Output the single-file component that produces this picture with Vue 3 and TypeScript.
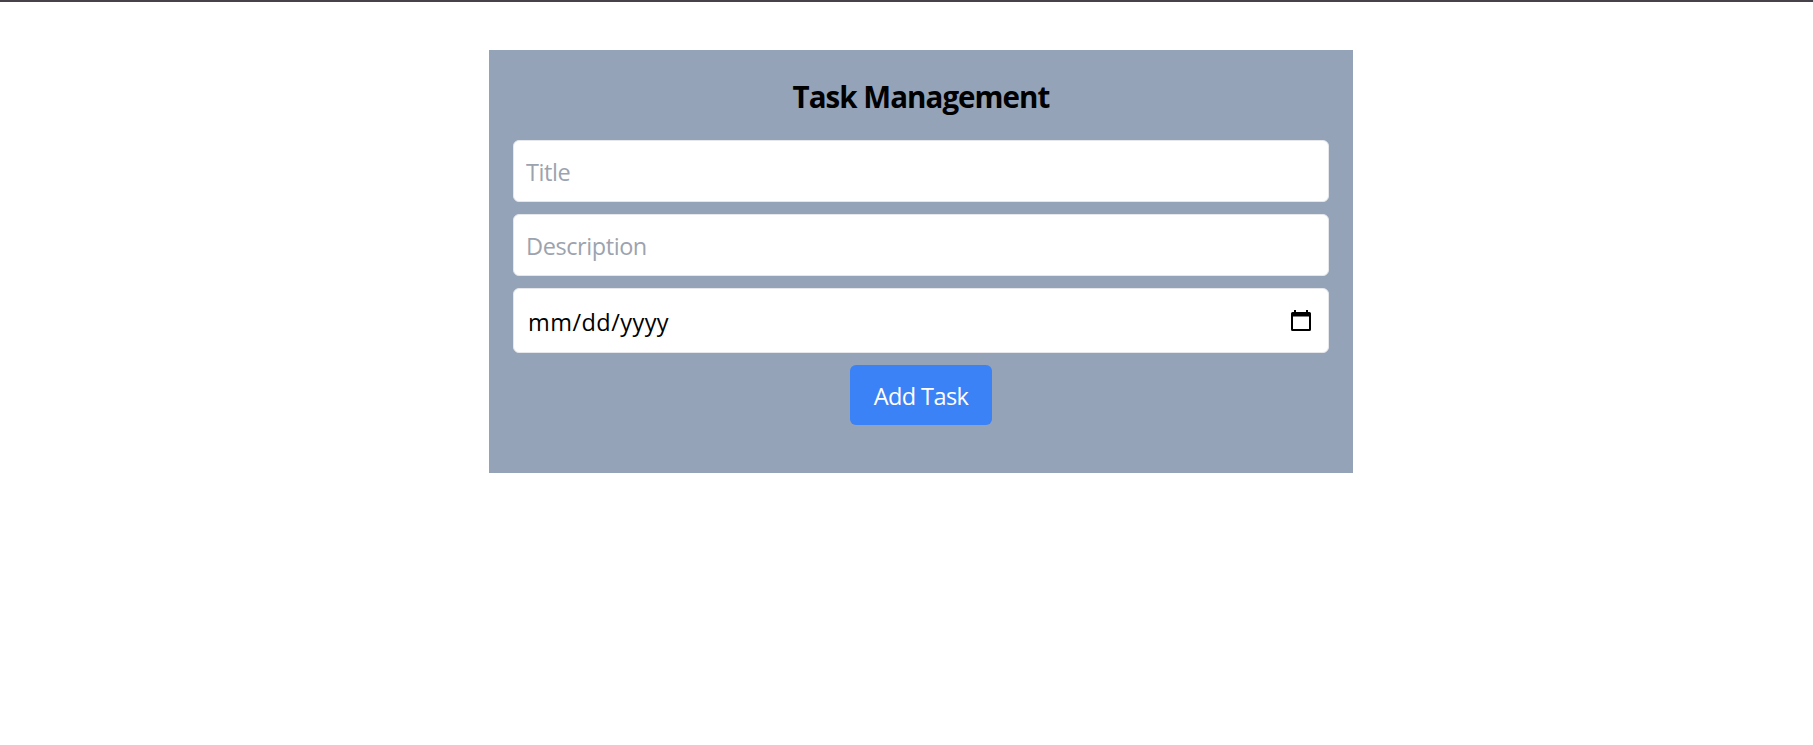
<script setup lang="ts">
import { ref } from 'vue'

const title = ref('')
const description = ref('')
</script>

<template>
  <main class="page">
    <form class="card" @submit.prevent>
      <h1 class="heading">Task Management</h1>
      <input v-model="title" class="field title" type="text" placeholder="Title" />
      <input v-model="description" class="field description" type="text" placeholder="Description" />
      <div class="field date">
        <span class="date-text">mm/dd/yyyy</span>
        <svg class="calendar" width="20" height="21" viewBox="0 0 20 21" aria-hidden="true">
          <path
            fill="#000"
            fill-rule="evenodd"
            d="M3 0h2v2h10V0h2v2h1.5Q20 2 20 3.5v16Q20 21 18.5 21h-17Q0 21 0 19.5v-16Q0 2 1.5 2H3zM2 6.5V19h16V6.5z"
          />
        </svg>
      </div>
      <button class="add" type="submit">Add Task</button>
    </form>
  </main>
</template>

<style>
body {
  margin: 0;
  background: #fff;
}
</style>

<style scoped>
.page {
  box-sizing: border-box;
  height: 745px;
  border-top: 2px solid #47414a;
  padding-top: 48px;
  padding-left: 489px;
  font-family: 'Segoe UI', 'Open Sans', 'Noto Sans', sans-serif;
  overflow: hidden;
}

.card {
  box-sizing: border-box;
  display: flex;
  flex-direction: column;
  align-items: center;
  width: 864px;
  height: 423px;
  padding: 24px;
  background: #94a3b8;
}

.heading {
  margin: 0 0 24px;
  height: 42px;
  font-size: 29.5px;
  line-height: 46px;
  font-weight: 700;
  letter-spacing: -0.95px;
  color: #000;
  white-space: nowrap;
}

.field {
  box-sizing: border-box;
  width: 100%;
  height: 62px;
  margin: 0 0 12px;
  padding: 2px 12px 0;
  border: 1px solid #e5e7eb;
  border-radius: 6px;
  background: #fff;
  color: #000;
  font-family: inherit;
  font-size: 23.5px;
  line-height: 36px;
  letter-spacing: -0.42px;
  outline: none;
}

.field::placeholder {
  color: #9ca3af;
  opacity: 1;
}

.date {
  display: flex;
  align-items: center;
  justify-content: space-between;
  height: 65px;
  padding: 0 17px 0 14px;
  letter-spacing: 0.45px;
}

.date-text {
  padding-top: 2px;
}

.add {
  width: 142px;
  height: 60px;
  padding: 2px 0 0;
  border: 0;
  border-radius: 6px;
  background: #3b82f6;
  color: #fff;
  font-family: inherit;
  font-size: 23.5px;
  line-height: 36px;
  letter-spacing: -0.6px;
  white-space: nowrap;
}
</style>
